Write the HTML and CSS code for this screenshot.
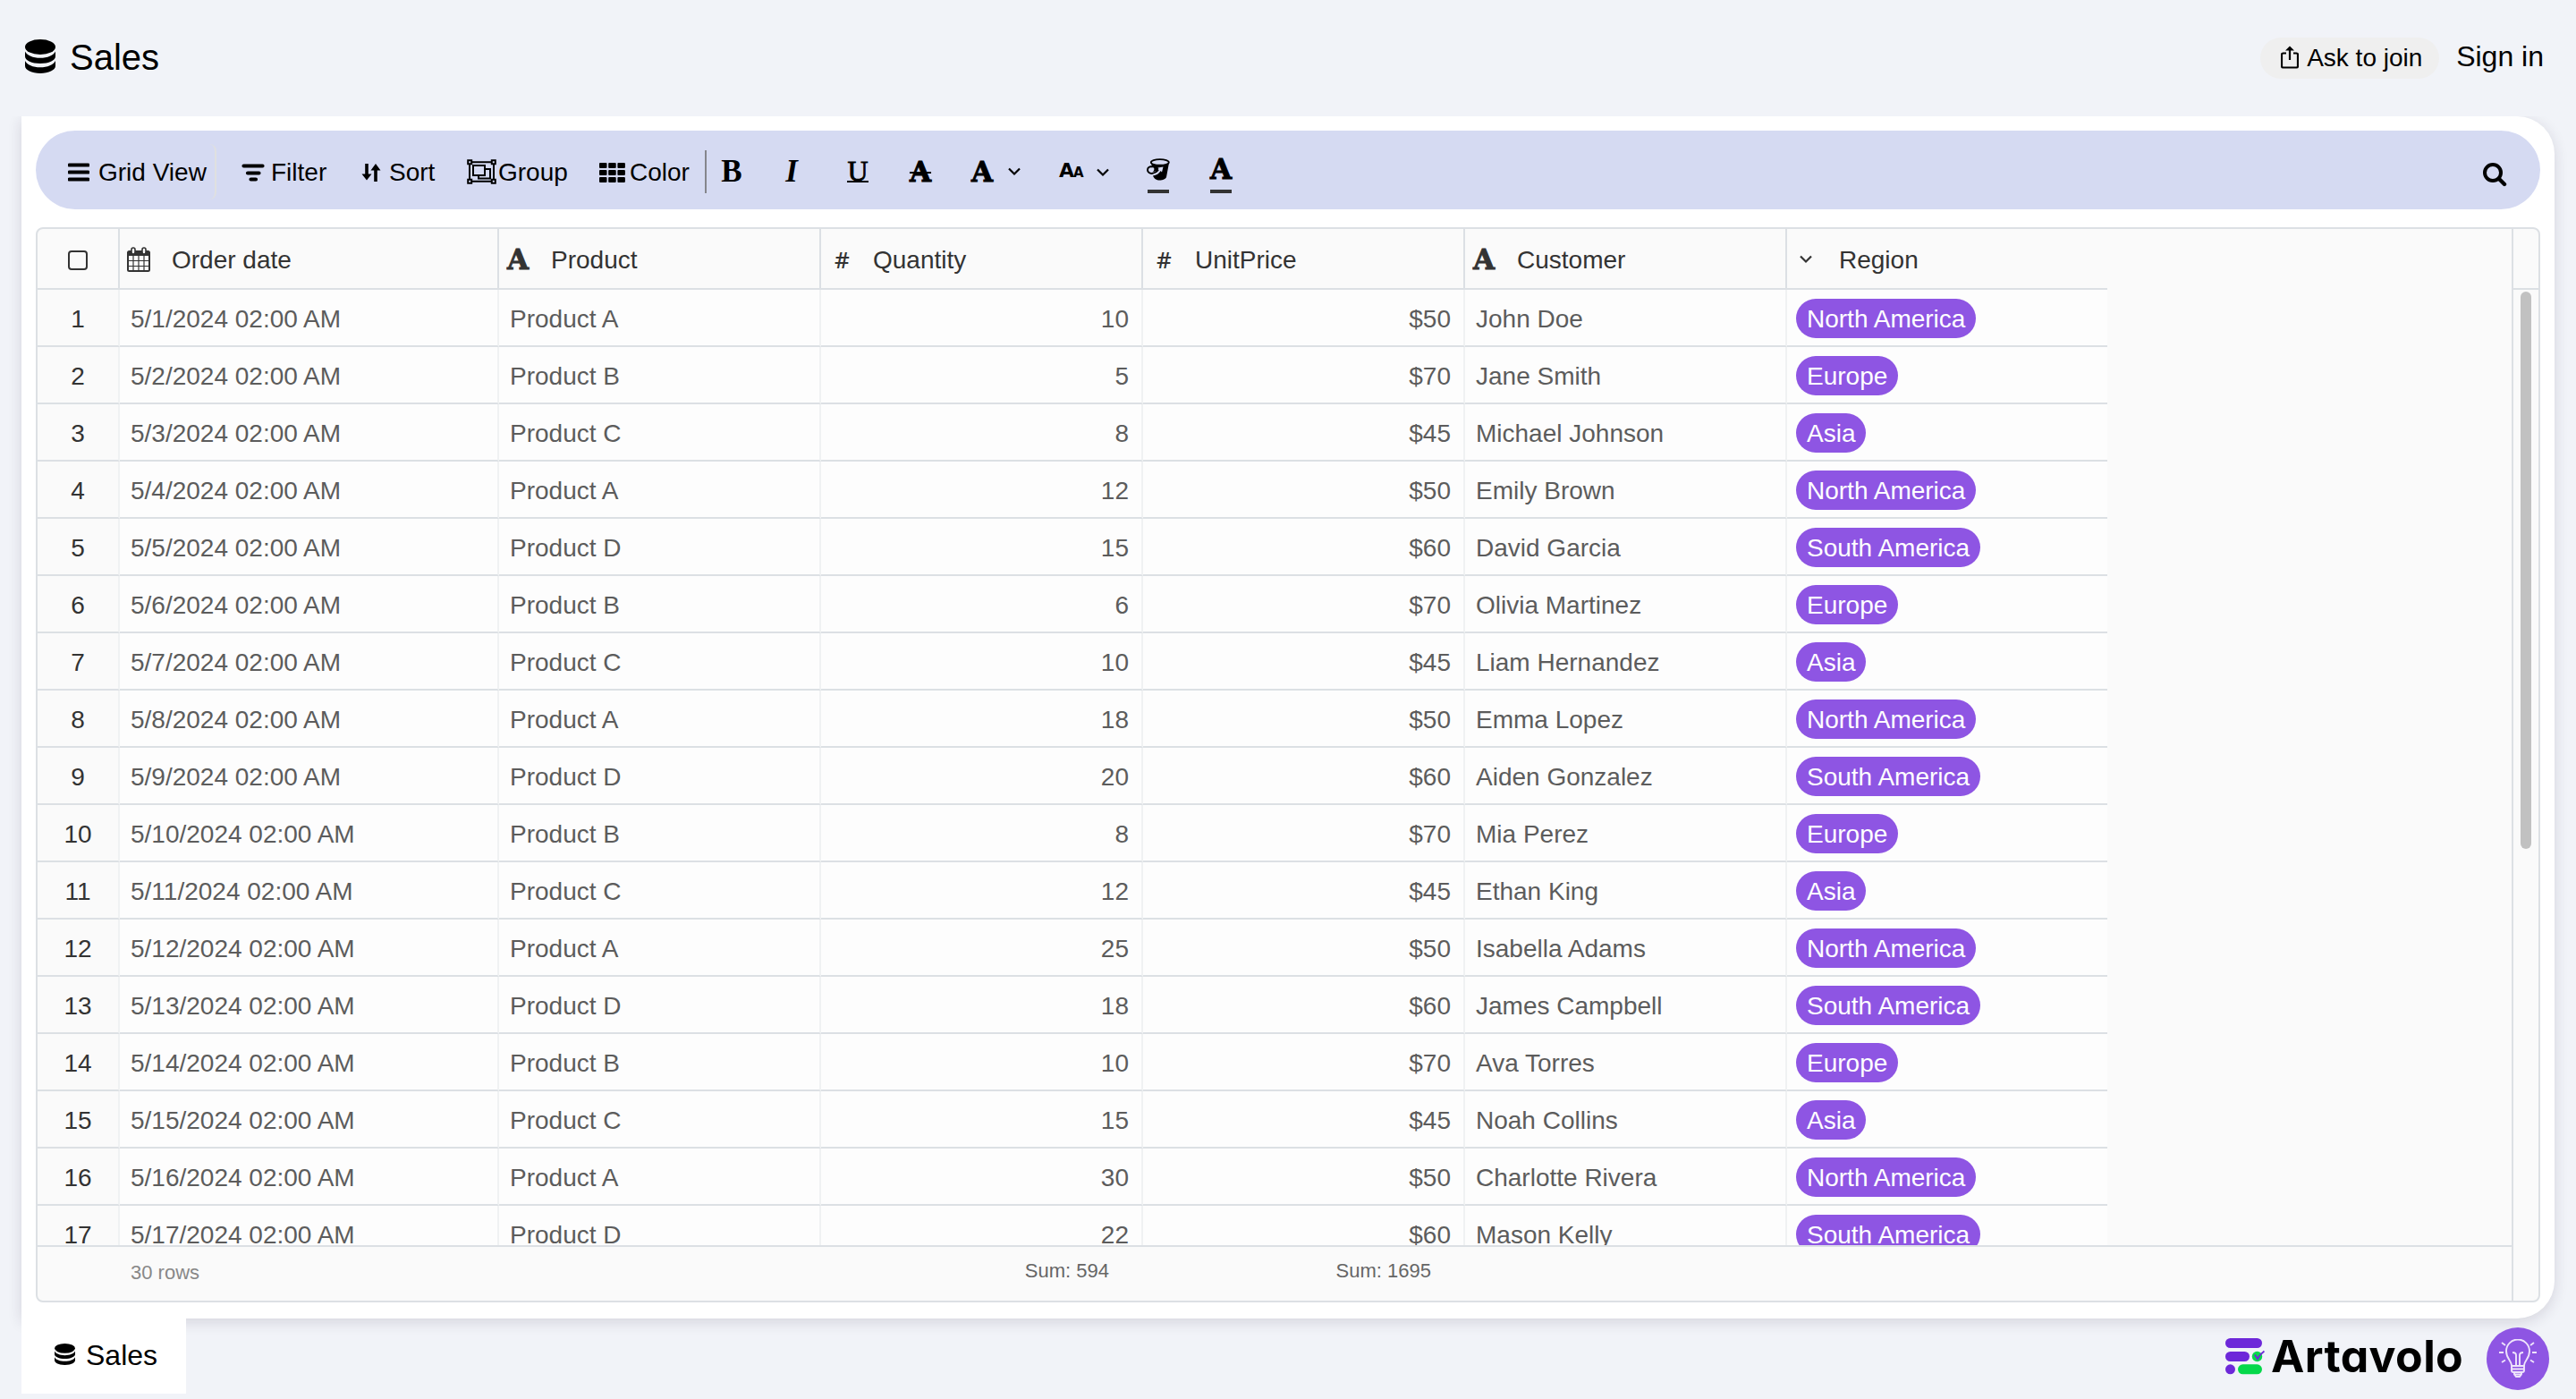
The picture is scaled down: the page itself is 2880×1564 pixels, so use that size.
FILE: index.html
```
<!DOCTYPE html>
<html lang="en">
<head>
  <meta charset="UTF-8" />
  <meta name="viewport" content="width=device-width, initial-scale=1.0"/>
  <title>Sales - Artavolo</title>
  <link rel="stylesheet" href="styles.css">
</head>
<body>
  <header class="top-bar">
    <svg class="db-icon" width="34" height="38" viewBox="0 0 34 38">
      <ellipse cx="17" cy="8.5" rx="17" ry="8.5"/>
      <path d="M0 13.500c2 4.500 9 7.300 17 7.300s15-2.800 17-7.300v5.500c0 4.500-7.600 8-17 8s-17-3.500-17-8z"/>
      <path d="M0 24c2 4.500 9 7.300 17 7.300s15-2.800 17-7.300v5.800c0 4.600-7.600 8.200-17 8.200s-17-3.600-17-8.200z"/>
    </svg>
    <h1>Sales</h1>
    <button class="join-btn">
      <svg width="20" height="26" viewBox="0 0 20 26">
        <path d="M6 8.500H2.500A1.500 1.500 0 0 0 1 10v13a1.500 1.500 0 0 0 1.500 1.500h15A1.500 1.500 0 0 0 19 23V10a1.500 1.500 0 0 0-1.500-1.500H14M10 16V3" fill="none" stroke="#000" stroke-width="2.200"/>
        <path d="M10 .5l5 5H5z"/>
      </svg>
      Ask to join
    </button>
    <a class="sign-in">Sign in</a>
  </header>

  <div class="main">
    <div class="card">
      <div class="toolbar">
        <button class="tool tool-view">
          <svg width="24" height="22" viewBox="0 0 24 22"><path d="M1.500 2.500h21M1.500 10.500h21M1.500 18.500h21" stroke="#000" stroke-width="4" stroke-linecap="round"/></svg>
          Grid View
        </button>
        <button class="tool tool-filter">
          <svg width="26" height="22" viewBox="0 0 26 22"><path d="M2.500 3.500h21M7 11.500h12.500M10.500 18.500h5.500" stroke="#000" stroke-width="4.200" stroke-linecap="round"/></svg>
          Filter
        </button>
        <button class="tool tool-sort">
          <svg width="22" height="22" viewBox="0 0 22 22"><path d="M6 1v15M16 21V6" stroke="#000" stroke-width="3.600"/><path d="M.5 12.500h11L6 19.500zM10.500 8.500h11L16 1z"/></svg>
          Sort
        </button>
        <button class="tool tool-group">
          <svg width="33" height="28" viewBox="0 0 33 28" fill="none" stroke="#000" stroke-width="2">
            <path d="M6 3.200h21M6 24.800h21M3 6v16M30 6v16"/>
            <path d="M1.200 1.200h4v4h-4zM27.800 1.200h4v4h-4zM1.200 22.800h4v4h-4zM27.800 22.800h4v4h-4z"/>
            <path d="M7 7h13v11H7zM20 11h6v10.500H13V18"/>
          </svg>
          Group
        </button>
        <button class="tool tool-color">
          <svg width="29" height="22" viewBox="0 0 29 22">
            <rect width="8.500" height="6" rx="1"/><rect x="10.200" width="8.500" height="6" rx="1"/><rect x="20.400" width="8.500" height="6" rx="1"/>
            <rect y="8" width="8.500" height="6" rx="1"/><rect x="10.200" y="8" width="8.500" height="6" rx="1"/><rect x="20.400" y="8" width="8.500" height="6" rx="1"/>
            <rect y="16" width="8.500" height="6" rx="1"/><rect x="10.200" y="16" width="8.500" height="6" rx="1"/><rect x="20.400" y="16" width="8.500" height="6" rx="1"/>
          </svg>
          Color
        </button>
        <div class="formatting">
          <button class="fmt fmt-bold serif">B</button>
          <button class="fmt fmt-italic serif">I</button>
          <button class="fmt underline">U</button>
          <button class="fmt slab strike">A</button>
          <button class="fmt-menu"><span class="slab">A</span>
            <svg width="14" height="10" viewBox="0 0 14 10"><path d="M1 1.500l6 6 6-6" fill="none" stroke="#000" stroke-width="2.200"/></svg>
          </button>
          <button class="fmt-menu size-menu"><span class="size-big">A</span><span class="size-small">A</span>
            <svg width="14" height="10" viewBox="0 0 14 10"><path d="M1 1.500l6 6 6-6" fill="none" stroke="#000" stroke-width="2.200"/></svg>
          </button>
          <button class="fmt color-fmt">
            <svg width="26" height="25" viewBox="0 0 26 25">
              <path d="M5 5l1 5c3 0 3 3 1 5 3 0 5-1 6.500-3l-1-1.500 6-1-1.500 6-1.300-1.500c-2 3-4.500 5-8.700 5.500 1 3 4 5 7.500 5s6.800-1.500 7.500-3.500L25 5z"/>
              <ellipse cx="14.800" cy="4.400" rx="10" ry="3.300" fill="#d5daf2" stroke="#000" stroke-width="1.800"/>
              <path d="M6.500 9.500C3 8.800 1 10.500 1 13s2.500 4.300 5.500 3.800c3-.5 5-1.800 6.500-3.800" fill="none" stroke="#000" stroke-width="2"/>
            </svg>
          </button>
          <button class="fmt color-fmt"><span class="slab">A</span></button>
        </div>
        <button class="search-btn">
          <svg width="28" height="28" viewBox="0 0 28 28" fill="none" stroke="#000" stroke-linecap="round">
            <circle cx="12" cy="12" r="9" stroke-width="4"/><path d="M19 19l6 6" stroke-width="4.400"/>
          </svg>
        </button>
      </div>

      <div class="grid">
        <div class="grid-body">
          <table>
            <colgroup>
              <col class="col-num"><col class="col-date"><col class="col-data"><col class="col-data"><col class="col-data"><col class="col-data"><col class="col-region">
            </colgroup>
            <thead>
              <tr>
                <th><div class="head-check"><span class="checkbox"></span></div></th>
                <th><div class="head"><span class="head-icon">
                  <svg width="26" height="28" viewBox="0 0 26 28">
                    <rect x="1" y="5" width="24" height="22" rx="1.500" fill="none" stroke="#333" stroke-width="2"/>
                    <path d="M1 5h24v5H1z" fill="#333"/>
                    <path d="M7 10v17M13 10v17M19 10v17M1 15.500h24M1 21.500h24" stroke="#333" stroke-width="1.200"/>
                    <rect x="5" y="1" width="4" height="7" rx="2" fill="#fafafa" stroke="#333" stroke-width="1.600"/>
                    <rect x="17" y="1" width="4" height="7" rx="2" fill="#fafafa" stroke="#333" stroke-width="1.600"/>
                  </svg></span>Order date</div></th>
                <th><div class="head"><span class="head-icon slab">A</span>Product</div></th>
                <th><div class="head"><span class="head-icon hash">#</span>Quantity</div></th>
                <th><div class="head"><span class="head-icon hash">#</span>UnitPrice</div></th>
                <th><div class="head"><span class="head-icon slab">A</span>Customer</div></th>
                <th><div class="head"><span class="head-icon arrow">
                  <svg width="14" height="10" viewBox="0 0 14 10"><path d="M1 1.500l6 6 6-6" fill="none" stroke="#333" stroke-width="2.200"/></svg></span>Region</div></th>
              </tr>
            </thead>
            <tbody id="rows"></tbody>
          </table>
        </div>
        <div class="grid-footer">
          <span class="row-count">30 rows</span>
          <span class="sum sum-quantity">Sum: 594</span>
          <span class="sum sum-price">Sum: 1695</span>
        </div>
        <div class="scroll-head"></div>
        <div class="scroll-track"><div class="scroll-thumb"></div></div>
      </div>
    </div>
  </div>

  <footer class="bottom-bar">
    <div class="tab">
      <svg class="db-icon" width="23" height="24" viewBox="0 0 34 38" preserveAspectRatio="none">
        <ellipse cx="17" cy="8.500" rx="17" ry="8.500"/>
        <path d="M0 13.500c2 4.500 9 7.300 17 7.300s15-2.800 17-7.300v5.500c0 4.500-7.600 8-17 8s-17-3.500-17-8z"/>
        <path d="M0 24c2 4.500 9 7.300 17 7.300s15-2.800 17-7.300v5.800c0 4.600-7.600 8.200-17 8.200s-17-3.600-17-8.200z"/>
      </svg>
      Sales
    </div>
    <div class="brand">
      <svg width="44" height="42" viewBox="0 0 44 42">
        <rect y="1" width="41" height="11" rx="5.500" fill="#6d28d9"/>
        <rect y="16" width="27" height="11" rx="5.500" fill="#6d28d9"/>
        <circle cx="35.500" cy="21.500" r="5.700" fill="#05d84b"/>
        <path d="M33 19.500l3 4.500c2-3.500 4-6 7.500-8.500" fill="none" stroke="#6d28d9" stroke-width="2"/>
        <circle cx="5.500" cy="35.800" r="5.500" fill="#6d28d9"/>
        <rect x="14" y="30.300" width="27" height="11" rx="5.500" fill="#05d84b"/>
      </svg>
      <span class="brand-name">Artavolo</span>
    </div>
    <div class="tips-btn">
      <svg width="42" height="44" viewBox="0 0 42 44" fill="none" stroke="#eee3fb" stroke-width="1.900">
        <path d="M14 30c0-6-6-8-6-16.500a13 13 0 0 1 26 0C34 22 28 24 28 30zM14 30v5q0 2 2 2h10q2 0 2-2v-5M14 33.500h14M17 37v2.500l2 2.500h4l2-2.500V37M17 39.500h8"/>
        <path d="M19 29V18q0-3-4-3M23 29V18q0-3 4-3"/>
        <path d="M0 15h5M37 15h5M3 4l4 3M39 4l-4 3M3 26l4-2.500M39 26l-4-2.500"/>
      </svg>
    </div>
  </footer>

  <script>
    const customers = [
      "John Doe", "Jane Smith", "Michael Johnson", "Emily Brown", "David Garcia", "Olivia Martinez",
      "Liam Hernandez", "Emma Lopez", "Aiden Gonzalez", "Mia Perez", "Ethan King", "Isabella Adams",
      "James Campbell", "Ava Torres", "Noah Collins", "Charlotte Rivera", "Mason Kelly"
    ];
    const quantities = [10, 5, 8, 12, 15, 6, 10, 18, 20, 8, 12, 25, 18, 10, 15, 30, 22];
    const products = "ABCADBCADBCADBCAD";
    const details = {
      A: { price: 50, region: "North America" },
      B: { price: 70, region: "Europe" },
      C: { price: 45, region: "Asia" },
      D: { price: 60, region: "South America" }
    };

    document.getElementById("rows").innerHTML = customers.map((name, i) => {
      const product = products[i];
      const { price, region } = details[product];
      return `<tr>
        <td class="num">${i + 1}</td>
        <td>5/${i + 1}/2024 02:00 AM</td>
        <td>Product ${product}</td>
        <td class="right">${quantities[i]}</td>
        <td class="right">$${price}</td>
        <td>${name}</td>
        <td class="region"><span class="tag">${region}</span></td>
      </tr>`;
    }).join("");
  </script>
</body>
</html>
```
FILE: styles.css
```
* {
  box-sizing: border-box;
}

body {
  margin: 0;
  height: 1564px;
  display: flex;
  flex-direction: column;
  overflow: hidden;
  background-color: #f1f3f8;
  color: #000;
  font-family: "Liberation Sans", Arial, sans-serif;
  font-size: 28px;
}

button {
  border: none;
  background: none;
  padding: 0;
  color: inherit;
  font-family: inherit;
  font-size: 28px;
}

svg {
  flex-shrink: 0;
}

/* top bar */
.top-bar {
  height: 130px;
  flex-shrink: 0;
  display: flex;
  align-items: center;
  padding: 0 36px 0 28px;
}

.top-bar .db-icon {
  margin-bottom: 4px;
}

h1 {
  margin: 0 auto 0 16px;
  padding-bottom: 1px;
  font-size: 40px;
  font-weight: normal;
}

.join-btn {
  width: 200px;
  height: 46px;
  display: flex;
  align-items: center;
  gap: 9px;
  padding-left: 23px;
  border-radius: 23px;
  background-color: #efefef;
  white-space: nowrap;
}

.join-btn svg {
  margin-bottom: 3px;
}

.sign-in {
  margin-left: 19px;
  padding-bottom: 4px;
  font-size: 32px;
}

/* card */
.main {
  height: 1374px;
  flex-shrink: 0;
  padding: 0 24px;
  overflow: hidden;
}

.card {
  height: 1344px;
  padding: 16px;
  background-color: #fff;
  border-radius: 0 42px 42px 0;
  box-shadow: 0 4px 16px rgba(40, 30, 60, 0.14);
}

/* toolbar */
.toolbar {
  height: 88px;
  display: flex;
  align-items: center;
  padding: 4px 37px 0 36px;
  border-radius: 44px;
  background-color: #d5daf2;
}

.tool {
  display: flex;
  align-items: center;
  flex-shrink: 0;
  height: 62px;
  padding-top: 2px;
  white-space: nowrap;
}

.tool-view {
  width: 166px;
  gap: 10px;
  margin-right: 28px;
  border-right: 2px solid #e0e0e0;
  border-radius: 8px;
}

.tool-filter {
  width: 134px;
  gap: 7px;
}

.tool-sort {
  width: 118px;
  gap: 9px;
}

.tool-group {
  width: 148px;
  gap: 2px;
}

.tool-group svg {
  margin-bottom: 2px;
}

.tool-color {
  width: 118px;
  gap: 5px;
}

.formatting {
  height: 48px;
  display: flex;
  align-items: center;
  border-left: 2px solid #85868c;
  margin-right: auto;
}

.fmt {
  width: 70px;
  height: 48px;
  display: flex;
  flex-direction: column;
  align-items: center;
  justify-content: center;
}

.serif {
  font-family: "Liberation Serif", serif;
  font-size: 35px;
  font-weight: bold;
}

.fmt-bold {
  width: 56px;
}

.fmt-italic {
  width: 78px;
  font-style: italic;
}

.underline {
  font-family: "Liberation Serif", serif;
  font-size: 32px;
  line-height: 22px;
  -webkit-text-stroke: 0.8px #000;
}

.underline::after {
  content: "";
  width: 24px;
  height: 2px;
  background-color: #000;
}

.slab {
  font-family: "DejaVu Serif", serif;
  font-size: 31px;
  font-weight: bold;
  -webkit-text-stroke: 1px currentColor;
}

.strike {
  text-decoration: line-through 2px;
}

.fmt-menu {
  width: 98px;
  height: 48px;
  display: flex;
  align-items: center;
  padding-left: 22px;
}

.fmt-menu svg {
  margin-left: 17px;
}

.size-menu {
  align-items: baseline;
  padding-top: 10px;
  font-family: "DejaVu Sans", sans-serif;
  font-weight: bold;
}

.size-big {
  font-size: 22px;
}

.size-small {
  font-size: 15px;
  margin-left: -1px;
}

.size-menu svg {
  margin-left: 14px;
  margin-bottom: 5px;
}

.color-fmt {
  justify-content: flex-start;
}

.color-fmt svg {
  margin: 9px 0 4px;
}

.color-fmt .slab {
  height: 38px;
  line-height: 42px;
}

.color-fmt::after {
  content: "";
  width: 24px;
  height: 4px;
  margin-top: 6px;
  background-color: #333;
}

.search-btn {
  display: flex;
  padding-top: 6px;
}

/* grid */
.grid {
  height: 1202px;
  margin-top: 20px;
  display: grid;
  grid-template-columns: 2766px 1fr;
  grid-template-rows: 68px 1068px 1fr;
  border: 2px solid #dce0e4;
  border-radius: 8px;
  background-color: #fafafa;
  overflow: hidden;
}

.grid-body {
  grid-column: 1;
  grid-row: 1 / 3;
  overflow: hidden;
}

table {
  width: 2314px;
  table-layout: fixed;
  border-collapse: separate;
  border-spacing: 0;
}

.col-num {
  width: 92px;
}

.col-date {
  width: 424px;
}

.col-data {
  width: 360px;
}

.col-region {
  width: 358px;
}

th {
  height: 68px;
  padding: 0;
  border-right: 2px solid #dce0e4;
  border-bottom: 2px solid #dce0e4;
  color: #333;
  font-weight: normal;
  text-align: left;
}

th:last-child {
  border-right: none;
}

.head {
  display: flex;
  align-items: center;
  padding-top: 4px;
}

.head-icon {
  width: 58px;
  height: 32px;
  padding: 0 0 2px 8px;
  display: flex;
  align-items: center;
}

.head-icon.slab {
  padding-left: 9px;
}

.head-icon.hash {
  padding-left: 15px;
  font-family: "Noto Sans", sans-serif;
  font-size: 26px;
  font-weight: 500;
}

.head-icon.arrow {
  padding-left: 14px;
}

.head-check {
  display: flex;
  justify-content: center;
  padding-top: 4px;
}

.checkbox {
  width: 22px;
  height: 22px;
  border: 2px solid #333;
  border-radius: 4px;
}

td {
  height: 64px;
  padding: 4px 14px 0 12px;
  border-right: 2px solid #f0f2f3;
  border-bottom: 2px solid #dce0e4;
  background-color: #fdfdfd;
  color: #5c5c5c;
  line-height: 32px;
  white-space: nowrap;
}

.num {
  padding-left: 14px;
  background-color: #fafafa;
  color: #333;
  text-align: center;
}

.right {
  text-align: right;
}

.region {
  padding: 2px 10px 0;
  border-right: none;
}

.tag {
  display: block;
  width: fit-content;
  height: 44px;
  padding: 1px 12px 0;
  border-radius: 22px;
  background-color: #8e55e3;
  color: #fff;
  line-height: 44px;
}

.grid-footer {
  grid-column: 1;
  grid-row: 3;
  display: flex;
  align-items: center;
  padding-bottom: 2px;
  border-top: 2px solid #dce0e4;
  color: #666;
  font-size: 22px;
}

.row-count {
  width: 772px;
  padding-left: 104px;
  color: #888;
}

.sum {
  padding-bottom: 4px;
  text-align: right;
}

.sum-quantity {
  width: 426px;
}

.sum-price {
  width: 360px;
}

.scroll-head {
  border-left: 2px solid #dce0e4;
  border-bottom: 2px solid #dce0e4;
}

.scroll-track {
  grid-column: 2;
  grid-row: 2 / 4;
  padding: 2px 8px;
  border-left: 2px solid #dce0e4;
}

.scroll-thumb {
  width: 12px;
  height: 623px;
  border-radius: 6px;
  background-color: #c1c1c1;
}

/* bottom bar */
.bottom-bar {
  height: 90px;
  flex-shrink: 0;
  margin-top: -30px;
  display: flex;
  padding: 0 30px 0 24px;
  position: relative;
}

.tab {
  width: 184px;
  height: 84px;
  display: flex;
  align-items: center;
  gap: 12px;
  margin-right: auto;
  padding: 0 0 2px 37px;
  background-color: #fff;
  font-size: 32px;
}

.tab svg {
  margin-bottom: 2px;
}

.brand {
  display: flex;
  align-items: center;
  gap: 7px;
  height: 84px;
}

.brand-name {
  width: 241px;
  font-family: Inter, sans-serif;
  font-feature-settings: "cv11";
  font-size: 50px;
  font-weight: 700;
  letter-spacing: 0.4px;
}

.tips-btn {
  width: 70px;
  height: 70px;
  margin-top: 10px;
  display: flex;
  align-items: center;
  justify-content: center;
  border-radius: 50%;
  background-color: #8e55e3;
}
```
